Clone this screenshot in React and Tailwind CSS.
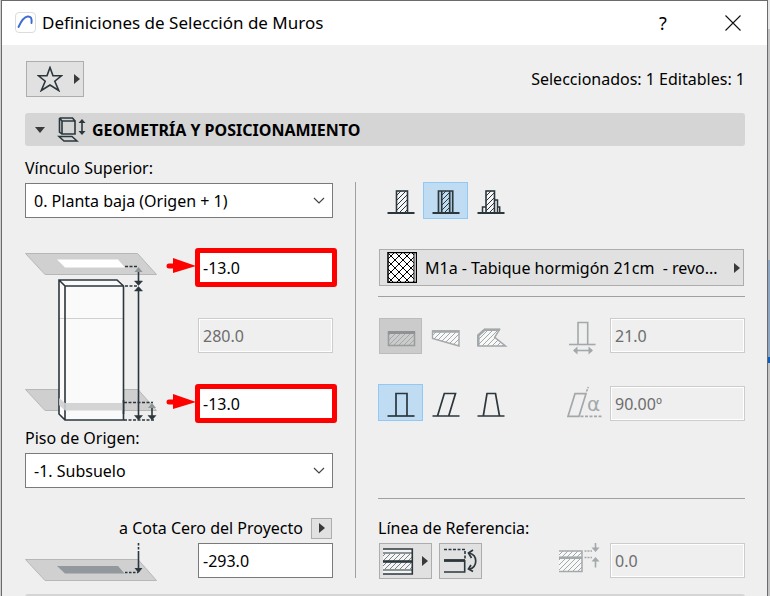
import React from "react";

const INK = "#2b373c";
const DIM = "#a3a8aa";

function Hatch({ id, color, gap = 5 }) {
  return (
    <pattern id={id} width={gap} height={gap} patternUnits="userSpaceOnUse">
      <path d={`M-1 1L1 -1M0 ${gap}L${gap} 0M${gap - 1} ${gap + 1}L${gap + 1} ${gap - 1}`} stroke={color} strokeWidth="1" />
    </pattern>
  );
}

function Icon({ w, h, children, className = "" }) {
  return (
    <svg width={w} height={h} viewBox={`0 0 ${w} ${h}`} fill="none" aria-hidden="true" className={`block shrink-0 ${className}`}>
      {children}
    </svg>
  );
}

function Triangle() {
  return (
    <Icon w={6} h={10}>
      <path d="M0 0L6 5L0 10Z" fill="#3a3a3a" />
    </Icon>
  );
}

function PickButton({ label, on, children }) {
  return (
    <button
      type="button"
      aria-label={label}
      aria-pressed={!!on}
      className={`h-[37px] w-[45px] border ${on ? "border-[#90c8f6] bg-[#c0dcf3]" : "border-transparent"}`}
    >
      {children}
    </button>
  );
}

function NumberField({ id, label, value, disabled }) {
  return (
    <input
      id={id}
      aria-label={label}
      defaultValue={value}
      disabled={disabled}
      className={`block h-[35px] w-[135px] border pl-1 text-base outline-none ${
        disabled ? "border-[#cccccc] bg-[#efefef] text-[#6d6d6d] ring-1 ring-inset ring-white" : "border-[#7a7a7a] bg-white text-black"
      }`}
    />
  );
}

function MarkedField({ id, label, value }) {
  return (
    <div className="relative">
      <NumberField id={id} label={label} value={value} />
      <div className="pointer-events-none absolute -inset-x-[3px] -inset-y-[2px] -right-1 rounded-[3px] border-[5px] border-[#ff0000]" />
      <Icon w={30} h={16} className="absolute right-full top-2 mr-[2px]">
        <path d="M3 8H12" stroke="#f00" strokeWidth="5" strokeLinecap="round" />
        <path d="M7 0L30 8L7 15Z" fill="#f00" />
      </Icon>
    </div>
  );
}

function SelectField({ id, label, options }) {
  return (
    <div>
      <label htmlFor={id} className="block h-6 leading-6">
        {label}
      </label>
      <div className="relative mt-[3px]">
        <select id={id} className="h-[35px] w-full appearance-none border border-[#7a7a7a] bg-white pl-2 text-base outline-none">
          {options.map((o) => (
            <option key={o}>{o}</option>
          ))}
        </select>
        <Icon w={12} h={8} className="pointer-events-none absolute right-2 top-[14px]">
          <path d="M1 1L6 6L11 1" stroke="#444" strokeWidth="1.2" />
        </Icon>
      </div>
    </div>
  );
}

function WallDiagram() {
  return (
    <Icon w={135} h={172}>
      <path d="M.5 139.500H113L131.500 160.500H20Z" fill="#cfcfcf" stroke="#b5b8b9" />
      <path d="M.5 3.500H112.500L131.500 24.500H20Z" fill="#d0d0d0" stroke="#b5b8b9" />
      <path d="M32 9.500H93L100 17.500H40Z" fill="#fff" />
      <path d="M34 30H92L98.500 36V170H40L34 164Z" fill="#fafafa" />
      <path d="M34 68.500H98" stroke="#cfcfcf" />
      <path d="M34 30H92L98.500 36V170H40L34 164ZM34 30L40 36H98.500M40 36V170" stroke={INK} strokeWidth="1.6" />
      <path d="M34 148L40 153H98V160.500H40L34 155Z" fill="#cfcfcf" fillOpacity=".9" />
      <path d="M98.500 150V164" stroke={INK} strokeWidth="1.6" />
      <path d="M100 16.500H113M100 36H113M99 152.500H128M99 170H130" stroke={INK} strokeWidth="1.3" strokeDasharray="3 1.500" />
      <path d="M113.500 22V31M113.500 41V166M127 157V166" stroke={INK} strokeWidth="1.6" />
      <path d="M109.500 22L113.500 17L117.500 22ZM123 158L127 153L131 158Z" fill="#8d9599" />
      <path d="M109.500 31L113.500 35.500L117.500 31ZM109.500 41L113.500 36.500L117.500 41ZM109.500 165.500L113.500 170L117.500 165.500ZM123 165.500L127 170L131 165.500Z" fill={INK} stroke={INK} strokeWidth=".5" />
    </Icon>
  );
}

function FloorDiagram() {
  return (
    <Icon w={135} h={39}>
      <path d="M.5 16.500H113L131.500 37.500H20Z" fill="#d0d0d0" stroke="#b5b8b9" />
      <path d="M32 23H93L99.500 30.500H40Z" fill="#92989b" />
      <path d="M113.500 0V10M100 29.500H113" stroke={INK} strokeWidth="1.6" strokeDasharray="2.500 1.500" />
      <path d="M113.500 10V26" stroke={INK} strokeWidth="1.6" />
      <path d="M109.500 25L113.500 30L117.500 25Z" fill={INK} />
    </Icon>
  );
}

function TitleBar() {
  return (
    <header className="flex h-11 items-center bg-white pl-3 pr-[26px]">
      <Icon w={22} h={22}>
        <rect x="1.500" y=".5" width="20" height="20" rx="3.500" fill="#fff" stroke="#dcdcdc" />
        <path d="M4.500 15C7 9.500 9.500 5 13.500 4.500C17 4.300 18 6 17.500 11" stroke="#3d6bd6" strokeWidth="1.900" strokeLinecap="round" />
      </Icon>
      <h1 className="ml-[6px] flex-1 text-[17px]">Definiciones de Selección de Muros</h1>
      <button type="button" aria-label="Ayuda" className="w-6 text-lg">
        ?
      </button>
      <button type="button" aria-label="Cerrar" className="ml-[50px]">
        <Icon w={16} h={16}>
          <path d="M.5 .5L15.500 15.500M15.500 .5L.5 15.500" stroke="#111" strokeWidth="1.1" />
        </Icon>
      </button>
    </header>
  );
}

function Verticals() {
  return (
    <div className="flex flex-col">
      <SelectField id="top-link" label="Vínculo Superior:" options={["0. Planta baja (Origen + 1)"]} />
      <div className="mt-8 flex justify-between">
        <WallDiagram />
        <div className="flex flex-col gap-[33px]">
          <MarkedField id="top-offset" label="Desplazamiento superior" value="-13.0" />
          <NumberField id="height" label="Altura" value="280.0" disabled />
          <MarkedField id="base-offset" label="Desplazamiento inferior" value="-13.0" />
        </div>
      </div>
      <div className="mt-1">
        <SelectField id="home-story" label="Piso de Origen:" options={["-1. Subsuelo"]} />
      </div>
      <div className="mt-7 flex items-center justify-end gap-2 pr-px">
        <label htmlFor="elevation">a Cota Cero del Proyecto</label>
        <button type="button" aria-label="Nivel de referencia" className="flex h-[21px] w-[21px] items-center justify-center border border-[#adadad] bg-[#e1e1e1]">
          <Triangle />
        </button>
      </div>
      <div className="mt-[3px] flex justify-between">
        <FloorDiagram />
        <NumberField id="elevation" value="-293.0" />
      </div>
    </div>
  );
}

function Structure() {
  return (
    <div className="min-w-0 pt-9">
      <div className="flex">
        <PickButton label="Básico">
          <Icon w={43} h={35}>
            <defs><Hatch id="h1" color={INK} /></defs>
            <rect x="17.500" y="8" width="11" height="22" fill="#f6f6f6" />
            <rect x="17.500" y="8" width="11" height="22" fill="url(#h1)" stroke={INK} strokeWidth="1.6" />
            <path d="M8.500 30H35.500" stroke={INK} strokeWidth="2" />
          </Icon>
        </PickButton>
        <PickButton label="Compuesto" on>
          <Icon w={43} h={35}>
            <rect x="18" y="8" width="8" height="22" fill="url(#h1)" />
            <path d="M14.500 30V8H28.700V30M17.700 8V30M25.700 8V30" stroke={INK} strokeWidth="1.7" />
            <path d="M8.500 30H35.500" stroke={INK} strokeWidth="2" />
          </Icon>
        </PickButton>
        <PickButton label="Perfil">
          <Icon w={43} h={35}>
            <path d="M13.500 30V24H17V8H25.500V17H28.500V24H30.500V30" fill="#f6f6f6" />
            <rect x="17" y="8" width="8.500" height="22" fill="url(#h1)" stroke={INK} strokeWidth="1.6" />
            <path d="M13.500 30V24H17M25.500 17H28.500V30M28.500 24H30.700V30" stroke={INK} strokeWidth="1.5" />
            <path d="M8.500 30H35.500" stroke={INK} strokeWidth="2" />
          </Icon>
        </PickButton>
      </div>

      <button type="button" className="ml-px mt-[30px] flex h-[37px] w-[calc(100%-2px)] items-center border border-[#adadad] bg-[#e1e1e1] pl-[7px] pr-[3px] text-left">
        <Icon w={30} h={31}>
          <defs>
            <pattern id="cross" width="8" height="8" patternUnits="userSpaceOnUse">
              <path d="M0 0L8 8M8 0L0 8" stroke="#000" strokeWidth="1" />
            </pattern>
          </defs>
          <rect x="1" y=".5" width="28" height="30" fill="#fff" />
          <rect x="1" y=".5" width="26" height="30" fill="url(#cross)" />
          <path d="M27 0V31" stroke="#000" strokeWidth="1" />
          <rect x="1" y=".5" width="28.500" height="30" stroke="#000" strokeWidth="1.500" />
        </Icon>
        <span className="ml-2 min-w-0 flex-1 overflow-hidden whitespace-pre">M1a - Tabique hormigón 21cm  - revo...</span>
        <Triangle />
      </button>

      <hr className="mt-[10px] border-[#a0a0a0]" />

      <div className="mt-[21px] flex items-start justify-between">
        <div className="flex">
          <button type="button" disabled aria-label="Recto" className="mx-px h-9 w-[43px] border border-[#bcbcbc] bg-[#cbcbcb]">
            <Icon w={41} h={34}>
              <defs><Hatch id="h2" color={DIM} /></defs>
              <rect x="8.500" y="13" width="26" height="13.500" fill="url(#h2)" stroke="#999d9f" strokeWidth="1.600" />
              <path d="M8 13.500H35" stroke="#8e9294" strokeWidth="3" />
            </Icon>
          </button>
          <button type="button" disabled aria-label="Trapezoidal" className="h-9 w-[45px] border border-transparent">
            <Icon w={43} h={34}>
              <path d="M8.500 12H35V27L8.500 19.500Z" fill="#f8f8f8" />
              <path d="M8.500 12H35V27L8.500 19.500Z" fill="url(#h2)" stroke={DIM} strokeWidth="1.400" />
              <path d="M8 12.500H35.500" stroke={DIM} strokeWidth="2.500" />
            </Icon>
          </button>
          <button type="button" disabled aria-label="Poligonal" className="h-9 w-[45px] border border-transparent">
            <Icon w={43} h={34}>
              <path d="M15.500 10.500H30.500L25.700 18.300L36.500 27H9V16Z" fill="#f8f8f8" />
              <path d="M15.500 10.500H30.500L25.700 18.300L36.500 27H9V16Z" fill="url(#h2)" stroke={DIM} strokeWidth="1.500" />
              <path d="M9.300 27V16.500L15.700 10.700H31" stroke={DIM} strokeWidth="2.500" />
            </Icon>
          </button>
        </div>
        <div className="flex gap-1">
          <Icon w={40} h={37}>
            <path d="M12 26V4.500H21.700V26" stroke={DIM} strokeWidth="1.600" />
            <path d="M3 26.500H29.500" stroke={DIM} strokeWidth="1.600" />
            <path d="M8 32.500H26" stroke={DIM} strokeWidth="1.600" />
            <path d="M11.500 28.500L7 32.500L11.500 36.500ZM22.500 28.500L27 32.500L22.500 36.500Z" fill={DIM} />
          </Icon>
          <NumberField id="thickness" label="Grosor" value="21.0" disabled />
        </div>
      </div>

      <div className="mt-[29px] flex items-start justify-between">
        <div className="flex">
          <PickButton label="Vertical" on>
            <Icon w={43} h={35}>
              <path d="M17 31V8.500H28V31" stroke={INK} strokeWidth="1.700" />
              <path d="M8.500 31H35.500" stroke={INK} strokeWidth="1.700" />
            </Icon>
          </PickButton>
          <PickButton label="Inclinado">
            <Icon w={43} h={35}>
              <path d="M13.500 31L20.300 8.500H31.500L24.700 31M8.500 31H35.500" stroke={INK} strokeWidth="1.700" />
            </Icon>
          </PickButton>
          <PickButton label="Doble inclinado">
            <Icon w={43} h={35}>
              <path d="M14.300 31L18 8.500H26.500L30.500 31M8.500 31H35.500" stroke={INK} strokeWidth="1.700" />
            </Icon>
          </PickButton>
        </div>
        <div className="mt-[2px] flex gap-1">
          <Icon w={40} h={35}>
            <path d="M9 7.700H20L13 30.300H2Z" stroke={DIM} strokeWidth="1.700" />
            <path d="M20.500 5.500L22.300 1" stroke={DIM} strokeWidth="1.600" strokeDasharray="2.500 1" />
            <path d="M14.500 30.300H36" stroke={DIM} strokeWidth="1.700" strokeDasharray="3 1.500" />
            <text x="21" y="25" fontSize="20" fontFamily="DejaVu Sans" fill={DIM}>α</text>
          </Icon>
          <NumberField id="slant" label="Ángulo" value="90.00º" disabled />
        </div>
      </div>

      <hr className="mt-[77px] border-[#a0a0a0]" />

      <p className="mt-[17px] h-6 leading-6">Línea de Referencia:</p>
      <div className="mt-[3px] flex items-start justify-between">
        <div className="ml-px flex gap-[7px]">
          <button type="button" aria-label="Posición de línea de referencia" className="flex h-9 w-[53px] items-center border border-[#adadad] bg-[#e1e1e1]">
            <Icon w={42} h={34}>
              <defs><Hatch id="h3" color="#7b8386" /></defs>
              <rect x="3" y="5" width="29" height="25" fill="#f4f4f4" />
              <rect x="3" y="10" width="29" height="16" fill="url(#h3)" />
              <path d="M3 9H32M3 26H32" stroke="#8d9495" strokeWidth="2" />
              <path d="M3 5H32.300V30H3" stroke={INK} strokeWidth="1.600" />
              <path d="M3 17.500H32" stroke={INK} strokeWidth="2.600" />
            </Icon>
            <Triangle />
          </button>
          <button type="button" aria-label="Invertir línea de referencia" className="h-9 w-[43px] border border-[#adadad] bg-[#e1e1e1]">
            <Icon w={41} h={34}>
              <path d="M4 5.500H25V15" stroke={INK} strokeWidth="1.600" strokeDasharray="3 1.500" />
              <path d="M4 16.500H25" stroke={INK} strokeWidth="2.800" />
              <path d="M4 28H24.700V16" stroke={INK} strokeWidth="1.600" />
              <path d="M29 9C38 11 38 23 29 25.500" stroke={INK} strokeWidth="1.700" />
              <path d="M33 6L28.500 9L31.500 14M31 21L28.500 25L33 27.500" stroke={INK} strokeWidth="1.700" />
            </Icon>
          </button>
        </div>
        <div className="flex gap-1">
          <Icon w={50} h={36}>
            <rect x="3" y="8" width="23" height="20" fill="#f8f8f8" />
            <rect x="3" y="8" width="23" height="20" fill="url(#h2)" />
            <path d="M3 8H26V28.500H3" stroke={DIM} strokeWidth="1.500" />
            <path d="M3 14.700H26" stroke={DIM} strokeWidth="2.600" />
            <path d="M28.500 8H36M28.500 14.500H36" stroke={DIM} strokeWidth="1.300" strokeDasharray="2 1" />
            <path d="M39.500 0V6M39.500 17V24.500" stroke={DIM} strokeWidth="1.600" />
            <path d="M35.500 4.500L39.500 9L43.500 4.500ZM35.500 18.500L39.500 14L43.500 18.500Z" fill={DIM} />
          </Icon>
          <NumberField id="ref-offset" label="Desplazamiento de línea" value="0.0" disabled />
        </div>
      </div>
    </div>
  );
}

export default function App() {
  return (
    <div className="flex h-screen overflow-hidden bg-[#d5d5d5] font-['Noto_Sans','Open_Sans',sans-serif] text-base leading-6 text-black">
      <div className="w-px shrink-0 bg-[#cfcfcf]" />
      <main className="min-w-0 flex-1 border-x border-t border-[#6b6b6e] bg-[#efefef]">
        <TitleBar />
        <div className="pl-[23px] pr-[22px]">
          <div className="flex items-center justify-between pt-4">
            <button type="button" aria-label="Favoritos" className="ml-px flex h-9 w-[58px] items-center border border-[#adadad] bg-[#e1e1e1] pl-[10px]">
              <Icon w={26} h={26} className="mr-[11px]">
                <path d="M13 1.500L16 9.800H24.500L17.800 15.200L21.700 24.500L13 19L4.300 24.500L8.200 15.200L1.500 9.800H10Z" stroke={INK} strokeWidth="1.600" />
              </Icon>
              <Triangle />
            </button>
            <p>Seleccionados: 1 Editables: 1</p>
          </div>

          <h2 className="mt-4 flex h-[33px] items-center rounded-[3px] bg-[#d5d5d5] pl-[10px] font-bold">
            <Icon w={10} h={6}>
              <path d="M0 0H10L5 6Z" fill="#3a3a3a" />
            </Icon>
            <Icon w={30} h={27} className="ml-3 mr-[5px]">
              <path d="M5 5H18V18H5ZM2.500 2H15.500L18 5M2.500 2L5 5M2.500 2V16L5 18" stroke={INK} strokeWidth="1.600" />
              <path d="M2 20.500H15L20 25H7Z" stroke={INK} strokeWidth="1.500" />
              <path d="M25 5V17" stroke={INK} strokeWidth="1.600" />
              <path d="M21.500 7L25 3L28.500 7ZM21.500 15L25 19L28.500 15Z" fill={INK} />
            </Icon>
            GEOMETRÍA Y POSICIONAMIENTO
          </h2>

          <section className="grid grid-cols-[308fr_45px_367fr]">
            <div className="min-w-0 pt-[10px]">
              <Verticals />
            </div>
            <div className="mb-1 ml-[22px] mt-9 border-l border-[#a0a0a0]" />
            <Structure />
          </section>

          <div className="mt-3 h-[33px] rounded-[3px] bg-[#d5d5d5]" />
        </div>
      </main>
      <div className="flex w-[2px] shrink-0 flex-col">
        <div className="h-[29px] bg-[#e6e6e6]" />
        <div className="h-[231px] bg-[#c4c4c4]" />
        <div className="h-[97px] bg-[#8ea6bf]" />
        <div className="h-[6px] bg-[#0a5fc4]" />
        <div className="flex-1 bg-[#c4c4c4]" />
      </div>
    </div>
  );
}
